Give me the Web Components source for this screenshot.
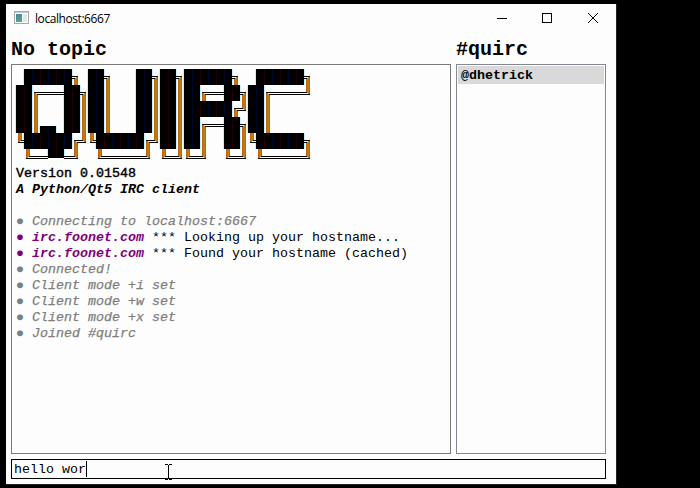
<!DOCTYPE html>
<html lang="en">
<head>
<meta charset="utf-8">
<title>localhost:6667</title>
<style>
html,body{margin:0;height:100%;background:#000;overflow:hidden}
body{display:flow-root;font:13.333px/16px "Liberation Mono",monospace;color:#000}
</style>
</head>
<body>
<irc-window></irc-window>
<script>
const define = (name, html, setup) => customElements.define(name, class extends HTMLElement {
  constructor() {
    super();
    this.attachShadow({mode: 'open'}).innerHTML = html.trim();
  }
  connectedCallback() { if (setup) setup(this.shadowRoot, this); }
});

define('title-bar', `
<style>
:host{display:flex;align-items:center;height:28px;padding-left:8px;font:12px/16px "Open Sans","Noto Sans",sans-serif}
span{margin-left:6px;flex:1;letter-spacing:-.43px;padding-top:2px}
.i{margin-bottom:1px}
.b{display:flex;margin-right:7px}
.b svg{display:block;margin-right:1px}
</style>
<svg class="i" width="15" height="13" viewBox="0 0 15 13" shape-rendering="crispEdges">
  <defs><linearGradient id="g" x2="0.3" y2="1"><stop stop-color="#4a7fae"/><stop offset="1" stop-color="#54a878"/></linearGradient></defs>
  <path fill="#fff" stroke="#a4a9b0" d="M.5.5h14v12H.5z"/><path stroke="#c5c9ce" d="M1 1.5h13"/>
  <path fill="url(#g)" d="M2 3h6v8H2z"/><path fill="#e3e7ea" d="M9 3h4v8H9z"/>
</svg>
<span><slot></slot></span>
<div class="b">
  <svg width="45" height="28" fill="none" stroke="#000" shape-rendering="crispEdges"><path d="M17 14.5h10"/></svg>
  <svg width="45" height="28" fill="none" stroke="#000" shape-rendering="crispEdges"><path d="M16.5 9.5h9v9h-9z"/></svg>
  <svg width="36" height="28" fill="none" stroke="#000"><path d="M16 9l10 10M26 9l-10 10"/></svg>
</div>`);

define('pane-heading', `
<style>:host{display:block;font-size:20px;line-height:24px;height:27px;box-sizing:border-box;font-weight:bold;white-space:pre}</style><slot></slot>`);

define('quirc-logo', `
<style>:host{display:block;height:96px}svg{display:block;overflow:visible}</style>
<svg width="296" height="96" shape-rendering="crispEdges" role="img" aria-label="QUIRC"></svg>`, root => {
  const rows = [
    ' ██████╗ ██╗   ██╗██╗██████╗  ██████╗',
    '██╔═══██╗██║   ██║██║██╔══██╗██╔════╝',
    '██║   ██║██║   ██║██║██████╔╝██║     ',
    '██║▄▄ ██║██║   ██║██║██╔══██╗██║     ',
    '╚██████╔╝╚██████╔╝██║██║  ██║╚██████╗',
    ' ╚══▀▀═╝  ╚═════╝ ╚═╝╚═╝  ╚═╝ ╚═════╝'
  ];
  let back = '', front = '';
  const r = (x, y, w, h, c) => `<rect x="${x}" y="${y}" width="${w}" height="${h}" fill="${c}"/>`;
  // Coloured fringes of a double vertical stroke.
  const fringe = ['#b8690f', '#4b8fc4', '#c47a17', '#b8690f'];
  const bars = (x, y, from, to) => fringe.map((c, i) => r(x + 2 + i, y + from, 1, to - from, c)).join('');
  rows.forEach((line, j) => [...line].forEach((ch, i) => {
    const x = i * 8, y = j * 16;
    if ('█▄▀'.includes(ch)) {
      const t = ch === '▄' ? 9 : 0, h = ch === '▄' ? 7 : ch === '▀' ? 9 : 16;
      back += r(x - 1, y + t, 1, h, '#ffe0b0') + r(x + 8, y + t, 1, h, '#c6f0ff');
      front += r(x, y + t, 8, h, '#000');
      if ('█▄▀'.includes(line[i - 1] || ' ')) front += r(x, y + t, 1, h, i % 2 ? '#200008' : '#000828');
    }
    if (ch === '║') front += bars(x, y, 0, 16);
    if (ch === '═') front += r(x, y + 7, 8, 1, '#000') + r(x, y + 9, 8, 1, '#000');
    if (ch === '╗') front += bars(x, y, 8, 16) + r(x, y + 7, 6, 1, '#000') + r(x, y + 9, 3, 1, '#000') + r(x, y + 8, 4, 1, '#fdfdfd');
    if (ch === '╔') front += bars(x, y, 8, 16) + r(x + 2, y + 7, 6, 1, '#000') + r(x + 5, y + 9, 3, 1, '#000') + r(x + 4, y + 8, 4, 1, '#fdfdfd');
    if (ch === '╝') front += bars(x, y, 0, 9) + r(x, y + 9, 6, 1, '#000') + r(x, y + 7, 3, 1, '#000') + r(x, y + 8, 4, 1, '#fdfdfd');
    if (ch === '╚') front += bars(x, y, 0, 9) + r(x + 2, y + 9, 6, 1, '#000') + r(x + 5, y + 7, 3, 1, '#000') + r(x + 4, y + 8, 4, 1, '#fdfdfd');
  }));
  root.querySelector('svg').innerHTML = back + front;
});

define('log-line', `
<style>
:host{display:block;height:16px;white-space:pre}
:host([kind=system]){color:#808080;font-style:italic;-webkit-text-stroke:.25px #808080}
i{font-style:normal}
b{color:#800080;font-style:italic}
:host([kind=system]) i{color:#778088}
:host([kind=server]) i{color:#800080}
</style><i></i><b></b><slot></slot>`, (root, el) => {
  root.querySelector('i').textContent = '● ';
  if (el.hasAttribute('from')) root.querySelector('b').textContent = el.getAttribute('from') + ' ';
});

define('chat-log', `
<style>
:host{display:block;box-sizing:border-box;border:1px solid #7a7a7a;padding:4px}
.v,.t{height:16px;font-weight:bold}
.v{margin-top:1px;font-weight:normal;-webkit-text-stroke:.4px #000}
.t{font-style:italic;margin-bottom:16px}
</style>
<quirc-logo></quirc-logo>
<div class="v">Version 0.01548</div><div class="t">A Python/Qt5 IRC client</div>
<slot></slot>`);

define('user-list', `
<style>
:host{display:block;box-sizing:border-box;border:1px solid #828790;padding:1px}
div{background:#d9d9d9;box-sizing:border-box;height:18px;padding:2px 0 0 3px;font-weight:bold}
</style><div><slot></slot></div>`);

define('message-input', `
<style>
:host{display:flex;align-items:flex-start;box-sizing:border-box;height:20px;border:1px solid #000;padding:2px 0 0 2px;white-space:pre;position:relative}
u{width:1px;height:16px;margin-top:-1px;background:#000}
svg{position:absolute;left:153px;top:4px}
</style><slot></slot><u></u>
<svg width="7" height="16" fill="none" stroke="#000" shape-rendering="crispEdges"><path d="M0 .5h3M4 .5h3M3.5 1v14M0 15.5h3M4 15.5h3"/></svg>`);

define('irc-window', `
<style>
:host{display:grid;box-sizing:border-box;width:611px;height:481px;margin:4px 0 0 6px;background:#fdfdfd;border-right:1px solid #222;border-bottom:1px solid #222;padding:0 10px 5px 5px;grid-template:32px 28px 390px 25px / 440px 150px;column-gap:5px}
title-bar{grid-column:1/3;margin:0 -10px 0 -5px}
pane-heading{margin-top:2px}
message-input{grid-column:1/3;margin-top:5px}
</style>
<title-bar>localhost:6667</title-bar>
<pane-heading>No topic</pane-heading>
<pane-heading>#quirc</pane-heading>
<chat-log>
<log-line kind="system">Connecting to localhost:6667</log-line>
<log-line kind="server" from="irc.foonet.com">*** Looking up your hostname...</log-line>
<log-line kind="server" from="irc.foonet.com">*** Found your hostname (cached)</log-line>
<log-line kind="system">Connected!</log-line>
<log-line kind="system">Client mode +i set</log-line>
<log-line kind="system">Client mode +w set</log-line>
<log-line kind="system">Client mode +x set</log-line>
<log-line kind="system">Joined #quirc</log-line>
</chat-log>
<user-list>@dhetrick</user-list>
<message-input>hello wor</message-input>`);
</script>
</body>
</html>
